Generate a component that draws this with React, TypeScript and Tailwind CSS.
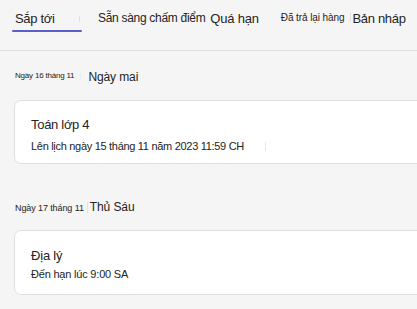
import React from "react";

const font = { fontFamily: '"Liberation Sans", Arial, sans-serif' };

const App = () => {
  return (
    <div className="h-[309px] w-[417px] overflow-hidden whitespace-nowrap bg-[#f5f5f5] text-[#242424]" style={font}>
      {/* tabs */}
      <div className="flex h-[51px] items-start border-b border-[#e0e0e0]">
        <div className="ml-[12px] flex h-[32px] w-[70px] shrink-0 flex-col justify-between">
          <div className="flex items-center pt-[11px]">
            <span className="pl-[3px] text-[13px] leading-[16px] tracking-[-0.3px]">Sắp tới</span>
            <span className="ml-auto mr-[2px] h-[6px] w-px bg-[#e0e0e0]" />
          </div>
          <div className="h-[2px] rounded-full bg-[#5b5fc7]" />
        </div>
        <span className="ml-[16px] shrink-0 pt-[10px] text-[12px] leading-[16px] tracking-[-0.3px]">Sẵn sàng chấm điểm</span>
        <span className="ml-[5px] shrink-0 pt-[11px] text-[13px] leading-[16px] tracking-[-0.2px]">Quá hạn</span>
        <span className="ml-[22px] shrink-0 pt-[10px] text-[10px] leading-[16px] tracking-[-0.1px]">Đã trả lại hàng</span>
        <span className="ml-[6px] mt-[12px] h-[10px] w-px shrink-0 bg-[#e0e0e0]" />
        <span className="ml-[1px] shrink-0 pt-[11px] text-[13px] leading-[16px] tracking-[-0.3px]">Bản nháp</span>
      </div>

      {/* group 1 */}
      <div className="flex items-center pl-[15px] pt-[16px]">
        <span className="text-[8px] leading-[10px] tracking-[-0.2px]">Ngày 16 tháng 11</span>
        <span className="ml-[6px] h-[6px] w-px bg-[#e8eef2]" />
        <span className="ml-[7px] mt-[3px] text-[12px] leading-[14px] tracking-[-0.1px]">Ngày mai</span>
      </div>
      <div className="ml-[14px] mt-[16px] h-[64px] w-[420px] rounded-[7px] border border-[#e0e0e0] bg-white pl-[16px] pt-[16px]">
        <div className="text-[13px] leading-[16px] tracking-[-0.3px]">Toán lớp 4</div>
        <div className="mt-[6px] flex items-center text-[11px] leading-[14px] tracking-[-0.3px]">
          <span>Lên lịch ngày 15 tháng 11 năm 2023 11:59 CH</span>
          <span className="ml-[21px] h-[9px] w-px bg-[#c8f4fb]" />
        </div>
      </div>

      {/* group 2 */}
      <div className="flex items-end pl-[15px] pt-[36px]">
        <span className="text-[9px] leading-[12px] tracking-[-0.1px]">Ngày 17 tháng 11</span>
        <span className="ml-[3px] mb-[1px] h-[11px] w-px bg-[#f3e3c0]" />
        <span className="ml-[2px] text-[12px] leading-[14px] tracking-[-0.1px]">Thủ Sáu</span>
      </div>
      <div className="ml-[14px] mt-[16px] h-[65px] w-[420px] rounded-[7px] border border-[#e0e0e0] bg-white pl-[16px] pt-[17px]">
        <div className="text-[13px] leading-[16px] tracking-[-0.2px]">Địa lý</div>
        <div className="mt-[3px] text-[11px] leading-[14px] tracking-[-0.2px]">Đến hạn lúc 9:00 SA</div>
      </div>
    </div>
  );
};

export default App;
